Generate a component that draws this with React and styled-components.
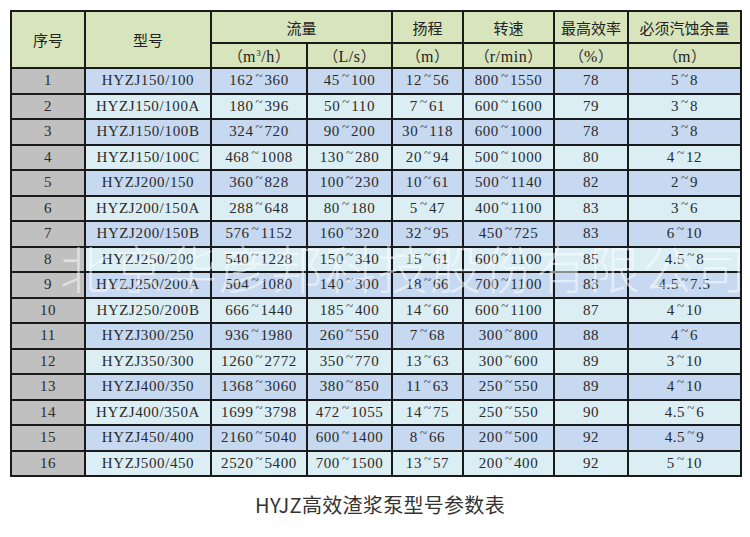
import React from "react";
import styled, { createGlobalStyle } from "styled-components";

const GlobalStyle = createGlobalStyle`
  html, body { margin: 0; padding: 0; background: #ffffff; }
  body { width: 750px; height: 537px; overflow: hidden; }
`;

const Page = styled.div`
  padding: 10px 0 0 10px;
  display: flex;
  flex-direction: column;
  align-items: flex-start;
`;

const TableWrap = styled.div`
  position: relative;
  width: 730px;
`;

const Table = styled.table`
  width: 730px;
  border-collapse: collapse;
  table-layout: fixed;
  border: 2px solid #111;
`;

const HeadCell = styled.th`
  background: #d7e4bc;
  border: 2px solid #1a1a1a;
  padding: 0;
  height: ${(p) => p.$h}px;
  font-family: "Noto Sans CJK SC", "Noto Sans", sans-serif;
  font-weight: 400;
  font-size: 15px;
  color: #222;
  text-align: center;
  vertical-align: middle;
`;

const UnitCell = styled(HeadCell)`
  font-family: "Liberation Serif", "Noto Sans CJK SC", serif;
  font-size: 16px;
  letter-spacing: 0.6px;
`;

const Paren = styled.span`
  font-family: "Noto Sans CJK SC", sans-serif;
  font-size: 15px;
  letter-spacing: 0;
  color: #333;
`;

const Sup = styled.sup`
  font-size: 9px;
  vertical-align: 6px;
  line-height: 0;
`;

const Row = styled.tr`
  height: 25.5px;
`;

const Cell = styled.td`
  border: 2px solid #1a1a1a;
  padding: 0;
  background: ${(p) => (p.$gray ? "#c0c0c0" : p.$odd ? "#c6d9f1" : "#dbeef4")};
  font-family: "Liberation Serif", "Times New Roman", serif;
  font-size: 15px;
  letter-spacing: 0.6px;
  color: #2a2a2a;
  text-align: center;
  vertical-align: middle;
  white-space: nowrap;
`;

const Tilde = styled.span`
  display: inline-block;
  width: 11px;
  text-align: center;
  letter-spacing: 0;
  font-size: 13px;
  transform: translateY(-5px);
`;

const Watermark = styled.div`
  position: absolute;
  left: 50px;
  top: 227px;
  width: 686px;
  display: flex;
  justify-content: space-between;
  font-family: "Noto Sans CJK SC", sans-serif;
  font-weight: 300;
  font-size: 51px;
  line-height: 60px;
  color: rgba(255, 255, 255, 0.5);
  pointer-events: none;
`;

const Caption = styled.div`
  width: 740px;
  margin-top: 13px;
  text-align: center;
  font-family: "Noto Sans CJK SC", "Noto Sans", sans-serif;
  font-size: 20px;
  color: #333;
  letter-spacing: 0.3px;
`;

const cols = [74, 126, 96, 85, 71, 91, 74, 113];

const data = [
  [1, "HYZJ150/100", "162~360", "45~100", "12~56", "800~1550", "78", "5~8"],
  [2, "HYZJ150/100A", "180~396", "50~110", "7~61", "600~1600", "79", "3~8"],
  [3, "HYZJ150/100B", "324~720", "90~200", "30~118", "600~1000", "78", "3~8"],
  [4, "HYZJ150/100C", "468~1008", "130~280", "20~94", "500~1000", "80", "4~12"],
  [5, "HYZJ200/150", "360~828", "100~230", "10~61", "500~1140", "82", "2~9"],
  [6, "HYZJ200/150A", "288~648", "80~180", "5~47", "400~1100", "83", "3~6"],
  [7, "HYZJ200/150B", "576~1152", "160~320", "32~95", "450~725", "83", "6~10"],
  [8, "HYZJ250/200", "540~1228", "150~340", "15~61", "600~1100", "85", "4.5~8"],
  [9, "HYZJ250/200A", "504~1080", "140~300", "18~66", "700~1100", "83", "4.5~7.5"],
  [10, "HYZJ250/200B", "666~1440", "185~400", "14~60", "600~1100", "87", "4~10"],
  [11, "HYZJ300/250", "936~1980", "260~550", "7~68", "300~800", "88", "4~6"],
  [12, "HYZJ350/300", "1260~2772", "350~770", "13~63", "300~600", "89", "3~10"],
  [13, "HYZJ400/350", "1368~3060", "380~850", "11~63", "250~550", "89", "4~10"],
  [14, "HYZJ400/350A", "1699~3798", "472~1055", "14~75", "250~550", "90", "4.5~6"],
  [15, "HYZJ450/400", "2160~5040", "600~1400", "8~66", "200~500", "92", "4.5~9"],
  [16, "HYZJ500/450", "2520~5400", "700~1500", "13~57", "200~400", "92", "5~10"],
];

function Range({ text }) {
  const parts = String(text).split("~");
  if (parts.length < 2) return <>{text}</>;
  return (
    <>
      {parts[0]}
      <Tilde>~</Tilde>
      {parts[1]}
    </>
  );
}

const Unit = ({ children }) => (
  <>
    <Paren>（</Paren>
    {children}
    <Paren>）</Paren>
  </>
);

export default function App() {
  return (
    <>
      <GlobalStyle />
      <Page>
        <TableWrap>
          <Table>
            <colgroup>
              {cols.map((w, i) => (
                <col key={i} style={{ width: w }} />
              ))}
            </colgroup>
            <thead>
              <tr>
                <HeadCell $h={30} rowSpan={2}>序号</HeadCell>
                <HeadCell $h={30} rowSpan={2}>型号</HeadCell>
                <HeadCell $h={30} colSpan={2}>流量</HeadCell>
                <HeadCell $h={30}>扬程</HeadCell>
                <HeadCell $h={30}>转速</HeadCell>
                <HeadCell $h={30}>最高效率</HeadCell>
                <HeadCell $h={30}>必须汽蚀余量</HeadCell>
              </tr>
              <tr>
                <UnitCell $h={23}>
                  <Unit>
                    m<Sup>3</Sup>/h
                  </Unit>
                </UnitCell>
                <UnitCell $h={23}>
                  <Unit>L/s</Unit>
                </UnitCell>
                <UnitCell $h={23}>
                  <Unit>m</Unit>
                </UnitCell>
                <UnitCell $h={23}>
                  <Unit>r/min</Unit>
                </UnitCell>
                <UnitCell $h={23}>
                  <Unit>%</Unit>
                </UnitCell>
                <UnitCell $h={23}>
                  <Unit>m</Unit>
                </UnitCell>
              </tr>
            </thead>
            <tbody>
              {data.map((r, i) => (
                <Row key={r[0]}>
                  <Cell $gray>{r[0]}</Cell>
                  {r.slice(1).map((v, j) => (
                    <Cell key={j} $odd={i % 2 === 0}>
                      <Range text={v} />
                    </Cell>
                  ))}
                </Row>
              ))}
            </tbody>
          </Table>
          <Watermark aria-hidden="true">
            {"北京华彦邦科技股份有限公司".split("").map((c, i) => (
              <span key={i}>{c}</span>
            ))}
          </Watermark>
        </TableWrap>
        <Caption>HYJZ高效渣浆泵型号参数表</Caption>
      </Page>
    </>
  );
}
